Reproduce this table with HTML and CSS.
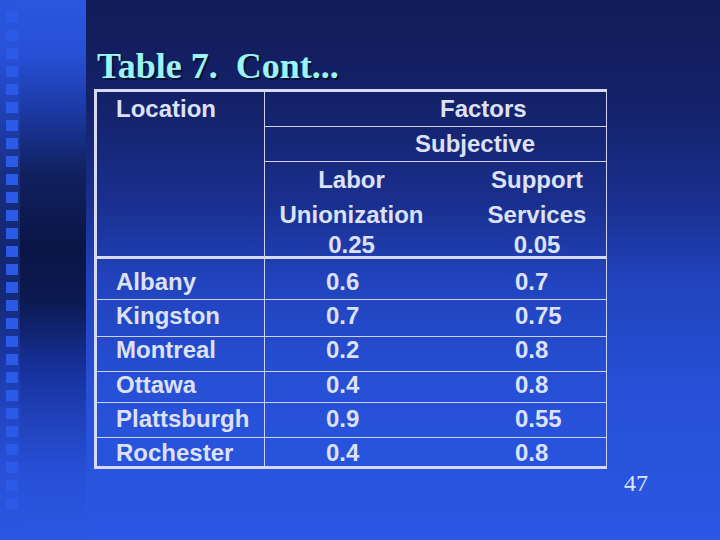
FILE: index.html
```html
<!DOCTYPE html>
<html>
<head>
<meta charset="utf-8">
<link rel="stylesheet" href="styles.css">
</head>
<body>
<div class="slide">
  <div class="rail">
    <div class="dots">
      <span class="dot"></span><span class="dot"></span><span class="dot"></span><span class="dot"></span>
      <span class="dot"></span><span class="dot"></span><span class="dot"></span><span class="dot"></span>
      <span class="dot"></span><span class="dot"></span><span class="dot"></span><span class="dot"></span>
      <span class="dot"></span><span class="dot"></span><span class="dot"></span><span class="dot"></span>
      <span class="dot"></span><span class="dot"></span><span class="dot"></span><span class="dot"></span>
      <span class="dot"></span><span class="dot"></span><span class="dot"></span><span class="dot"></span>
      <span class="dot"></span><span class="dot"></span><span class="dot"></span><span class="dot"></span>
    </div>
  </div>
  <div class="main">
    <h1 class="title">Table 7.&nbsp; Cont...</h1>
    <div class="tbl">
      <div class="cell loc">Location</div>
      <div class="cell factors">Factors</div>
      <div class="cell subj">Subjective</div>
      <div class="cell hd hd2"><div class="l1">Labor</div><div class="l2">Unionization</div><div class="l3">0.25</div></div>
      <div class="cell hd hd3"><div class="l1">Support</div><div class="l2">Services</div><div class="l3">0.05</div></div>

      <div class="cell c1 r4">Albany</div><div class="cell c2 r4">0.6</div><div class="cell c3 r4">0.7</div>
      <div class="cell c1 r5">Kingston</div><div class="cell c2 r5">0.7</div><div class="cell c3 r5">0.75</div>
      <div class="cell c1 r6">Montreal</div><div class="cell c2 r6">0.2</div><div class="cell c3 r6">0.8</div>
      <div class="cell c1 r7">Ottawa</div><div class="cell c2 r7">0.4</div><div class="cell c3 r7">0.8</div>
      <div class="cell c1 r8">Plattsburgh</div><div class="cell c2 r8">0.9</div><div class="cell c3 r8">0.55</div>
      <div class="cell c1 r9 last">Rochester</div><div class="cell c2 r9 last">0.4</div><div class="cell c3 r9 last">0.8</div>
    </div>
    <div class="pageno">47</div>
  </div>
</div>
</body>
</html>
```
FILE: styles.css
```css
* { box-sizing: border-box; }
html, body { margin: 0; padding: 0; }
body { width: 720px; height: 540px; overflow: hidden; }

.slide {
  display: flex;
  width: 720px;
  height: 540px;
}

.rail {
  width: 86px;
  height: 540px;
  background: linear-gradient(to bottom,
    #2a57e0 0%, #2650d6 10%, #1c3aa6 20%, #10215f 32%,
    #0a1546 46%, #0c1a52 56%, #16309a 68%, #2142bc 78%,
    #2750d8 88%, #2a57e2 100%);
}

.dots {
  width: 20px;
  height: 540px;
  padding: 12px 0 0 6px;
  display: flex;
  flex-direction: column;
  gap: 7px;
  background: rgba(42, 86, 224, 0.28);
}

.dot {
  display: block;
  width: 12px;
  height: 11px;
  flex: none;
  background: #2b5ae8;
}

.main {
  flex: 1;
  height: 540px;
  padding: 48px 0 0 8px;
  background: linear-gradient(to bottom,
    #121c58 0%, #14226a 20%, #1a3090 38%, #2143bd 52%,
    #2650d6 72%, #2a57e4 100%);
}

.title {
  margin: 0 0 5px 3px;
  height: 36px;
  font-family: "Liberation Serif", "Times New Roman", serif;
  font-weight: bold;
  font-size: 36px;
  line-height: 36px;
  color: #9cf4f2;
  text-shadow: 2px 2px 0 #0a1136;
  white-space: nowrap;
}

.tbl {
  width: 513px;
  display: grid;
  grid-template-columns: 168px 173px 168px;
  grid-template-rows: 35px 35px 97px 41px 37px 35px 31px 35px 28px;
  border-left: 3px solid #d6daf0;
  border-top: 3px solid #d6daf0;
  border-bottom: 3px solid #d6daf0;
  border-right: 1px solid #cbd1ee;
  font-family: "Liberation Sans", Arial, sans-serif;
  font-weight: bold;
  font-size: 24px;
  line-height: 24px;
  color: #dde1f6;
}

.cell {
  white-space: nowrap;
  border-bottom: 1px solid #cbd1ee;
}

.loc {
  grid-column: 1;
  grid-row: 1 / 4;
  border-right: 1px solid #cbd1ee;
  border-bottom: 3px solid #d6daf0;
  padding: 5px 0 0 19px;
}

.factors {
  grid-column: 2 / 4;
  grid-row: 1;
  padding: 5px 0 0 175px;
}

.subj {
  grid-column: 2 / 4;
  grid-row: 2;
  padding: 5px 0 0 150px;
}

.hd {
  grid-row: 3;
  border-bottom: 3px solid #d6daf0;
  padding-top: 6px;
  text-align: center;
}
.hd2 { grid-column: 2; }
.hd3 { grid-column: 3; padding-left: 30px; }
.hd .l1 { height: 35px; }
.hd .l2 { height: 30px; }
.hd .l3 { height: 24px; }

.c1 { grid-column: 1; border-right: 1px solid #cbd1ee; padding-left: 19px; }
.c2 { grid-column: 2; padding-left: 61px; }
.c3 { grid-column: 3; padding-left: 77px; }

.r4 { grid-row: 4; padding-top: 11px; }
.r5 { grid-row: 5; padding-top: 4px; }
.r6 { grid-row: 6; padding-top: 1px; }
.r7 { grid-row: 7; padding-top: 1px; }
.r8 { grid-row: 8; padding-top: 4px; }
.r9 { grid-row: 9; padding-top: 3px; }
.last { border-bottom: none; }

.pageno {
  margin-top: 2px;
  padding-right: 72px;
  text-align: right;
  font-family: "Liberation Serif", "Times New Roman", serif;
  font-size: 24px;
  line-height: 24px;
  color: #dde4f8;
}
```
